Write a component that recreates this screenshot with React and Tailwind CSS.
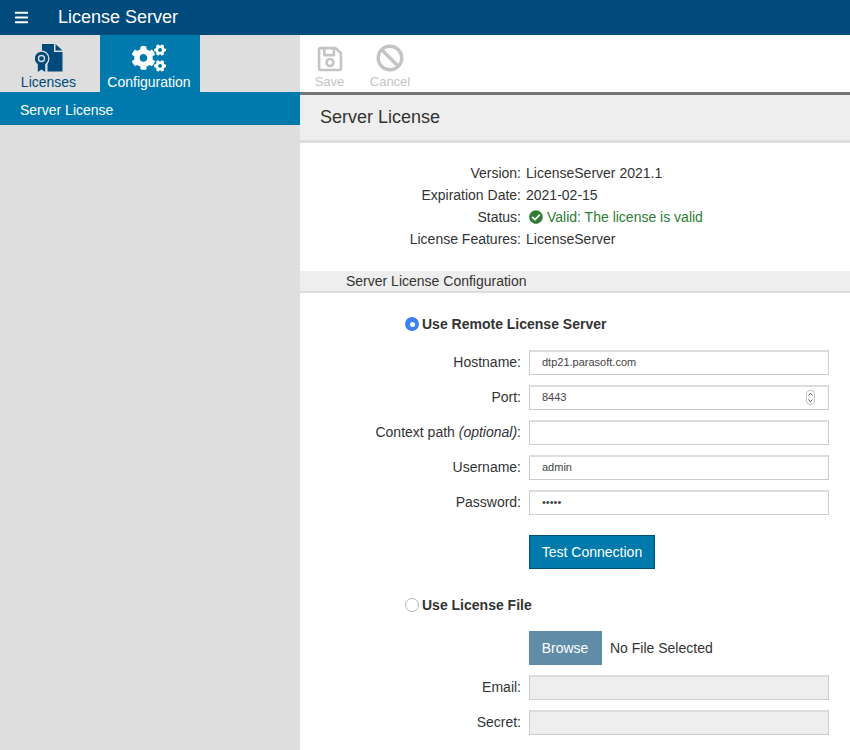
import React from "react";
import { FaBars, FaCogs, FaRegSave, FaBan, FaCheckCircle } from "react-icons/fa";

function LicenseIcon() {
  return (
    <svg width="28" height="28" viewBox="0 0 28 28" className="block">
      <path d="M7 0H19V8H27.5V27.5H7z" fill="#004a7c" />
      <path d="M20.5 0L27.5 6.5H20.5z" fill="#004a7c" />
      <path d="M1.5 18.5V28H12.5V18.5z" fill="#dedede" />
      <circle cx="6.5" cy="14.5" r="8" fill="#dedede" />
      <path d="M2.8 19V28L6.5 25.6 10.2 28V19z" fill="#004a7c" />
      <circle cx="6.5" cy="14.5" r="5.2" fill="#dedede" stroke="#004a7c" strokeWidth="3" />
      <circle cx="6.5" cy="14.5" r="2.3" fill="#004a7c" />
    </svg>
  );
}

function Row({ label, children }) {
  return (
    <div className="flex items-center h-[25px]">
      <label className="w-[229px] shrink-0 text-right pr-2">{label}</label>
      {children}
    </div>
  );
}

function Field({ value, type = "text", disabled = false, spinner = false }) {
  return (
    <div className="relative w-[300px]">
      <input
        type={type}
        defaultValue={value}
        disabled={disabled}
        className={`block w-full h-[25px] border border-[#cccccc] border-t-2 border-t-[#dddddd] px-[12px] pb-[2px] text-[11px] text-[#444] outline-none ${disabled ? "bg-[#eeeeee]" : "bg-white"}`}
      />
      {spinner && (
        <span className="absolute right-[14px] top-[5px] w-[9px] h-[15px] rounded-[4px] border border-[#c4c4c4] flex flex-col items-center justify-center">
          <svg width="5" height="11" viewBox="0 0 5 11" className="block">
            <path d="M0.5 3.5 2.5 1.2 4.5 3.5M0.5 7.5 2.5 9.8 4.5 7.5" fill="none" stroke="#555" strokeWidth="1" />
          </svg>
        </span>
      )}
    </div>
  );
}

function Info({ label, children }) {
  return (
    <div className="flex items-center h-[22px]">
      <div className="w-[226px] shrink-0 text-right pr-[5px]">{label}</div>
      <div className="flex items-center">{children}</div>
    </div>
  );
}

export default function App() {
  return (
    <div className="w-[850px] h-[750px] overflow-hidden flex flex-col bg-white text-[14px] text-[#333] [font-family:Liberation_Sans,Arial,sans-serif]">
      <header className="h-[35px] shrink-0 bg-[#004a7c] flex items-center text-white">
        <FaBars className="ml-[14px] w-[15px] h-[15px]" />
        <span className="ml-[29px] text-[18px]">License Server</span>
      </header>
      <div className="flex flex-1 min-h-0">
        <aside className="w-[300px] shrink-0 bg-[#dedede]">
          <div className="flex h-[57px]">
            <div className="w-[97px] mr-[3px] flex flex-col items-center text-[#004a7c]">
              <div className="mt-[9px] h-[28px]"><LicenseIcon /></div>
              <span className="mt-[2px] leading-[16px]">Licenses</span>
            </div>
            <div className="w-[100px] pr-[2px] flex flex-col items-center bg-[#007aad] text-white">
              <FaCogs className="mt-[9px] w-[34px] h-[28px]" />
              <span className="mt-[2px] leading-[16px]">Configuration</span>
            </div>
          </div>
          <div className="h-[33px] pt-[4px] bg-[#007aad] text-white flex items-center pl-[20px]">Server License</div>
        </aside>
        <main className="flex-1 min-w-0">
          <div className="h-[57px] flex text-[#c4c4c4] text-[13px]">
            <div className="w-[59px] flex flex-col items-center">
              <FaRegSave className="mt-[10px] w-[28px] h-[28px]" />
              <span className="mt-[1px] leading-[16px]">Save</span>
            </div>
            <div className="w-[62px] flex flex-col items-center">
              <FaBan className="mt-[9px] w-[28px] h-[28px]" />
              <span className="mt-[2px] leading-[16px]">Cancel</span>
            </div>
          </div>
          <div className="h-[3px] bg-[#757575]" />
          <div className="h-[48px] bg-[#eeeeee] border-b-[3px] border-[#dddddd] flex items-center pl-[20px] text-[18px]">Server License</div>
          <section className="pt-[19px]">
            <Info label="Version:">LicenseServer 2021.1</Info>
            <Info label="Expiration Date:">2021-02-15</Info>
            <Info label="Status:">
              <span className="flex items-center text-[#2e7d32]">
                <FaCheckCircle className="ml-[3px] mr-[4px] w-[14px] h-[14px]" />
                Valid: The license is valid
              </span>
            </Info>
            <Info label="License Features:">LicenseServer</Info>
          </section>
          <div className="mt-[21px] h-[22px] bg-[#eeeeee] border-b-2 border-[#dddddd] pl-[46px] flex items-center">Server License Configuration</div>
          <form className="mt-[21px]">
            <div className="flex items-center h-[20px] pl-[105px] font-bold">
              <span className="w-[14px] h-[14px] rounded-full bg-[#3b82f6] flex items-center justify-center mr-[3px]">
                <span className="w-[5px] h-[5px] rounded-full bg-white" />
              </span>
              Use Remote License Server
            </div>
            <div className="mt-[16px] flex flex-col gap-[10px]">
              <Row label="Hostname:"><Field value="dtp21.parasoft.com" /></Row>
              <Row label="Port:"><Field value="8443" spinner /></Row>
              <Row label={<>Context path <i>(optional)</i>:</>}><Field value="" /></Row>
              <Row label="Username:"><Field value="admin" /></Row>
              <Row label="Password:"><Field value="admin" type="password" /></Row>
            </div>
            <div className="mt-[20px] pl-[229px]">
              <button type="button" className="block h-[34px] w-[126px] bg-[#007aad] border border-[#004a7c] text-white">Test Connection</button>
            </div>
            <div className="mt-[26px] flex items-center h-[20px] pl-[105px] font-bold">
              <span className="w-[14px] h-[14px] rounded-full bg-white border border-[#b5b5b5] mr-[3px]" />
              Use License File
            </div>
            <div className="mt-[16px] pl-[229px] flex items-center">
              <button type="button" className="block h-[34px] w-[73px] pr-[1px] bg-[#5f8ca6] text-white">Browse</button>
              <span className="ml-[8px]">No File Selected</span>
            </div>
            <div className="mt-[10px] flex flex-col gap-[10px]">
              <Row label="Email:"><Field value="" disabled /></Row>
              <Row label="Secret:"><Field value="" disabled /></Row>
            </div>
          </form>
        </main>
      </div>
    </div>
  );
}
